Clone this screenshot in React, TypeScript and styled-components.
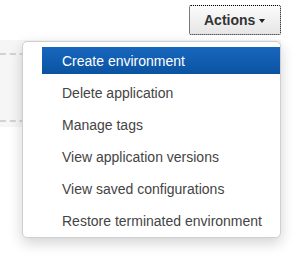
import React from 'react';
import styled, { createGlobalStyle } from 'styled-components';

const GlobalStyle = createGlobalStyle`
  html, body {
    margin: 0;
    padding: 0;
    background: #fff;
    font-family: "Liberation Sans", Arial, sans-serif;
  }
`;

const Page = styled.div`
  width: 301px;
  height: 257px;
  overflow: hidden;
`;

const Toolbar = styled.div`
  display: flex;
  justify-content: flex-end;
  padding: 5px 20px 0 0;
`;

const ActionsWrap = styled.div`
  position: relative;
`;

const ActionsButton = styled.button`
  display: flex;
  align-items: center;
  gap: 4px;
  box-sizing: border-box;
  width: 92px;
  height: 30px;
  padding: 0 0 0 14px;
  border: 1px dotted #000;
  border-radius: 2px;
  background: linear-gradient(#fbfbfb, #e6e6e6);
  color: #333;
  font-family: "Liberation Sans", Arial, sans-serif;
  font-size: 14px;
  font-weight: bold;
  cursor: pointer;
`;

const Caret = styled.span`
  width: 0;
  height: 0;
  margin-top: 1px;
  border-left: 3.5px solid transparent;
  border-right: 3.5px solid transparent;
  border-top: 4px solid #222;
`;

const Menu = styled.ul`
  position: absolute;
  top: calc(100% + 6px);
  right: 0;
  z-index: 2;
  box-sizing: border-box;
  width: 259px;
  margin: 0;
  padding: 5px 0 3px 0;
  list-style: none;
  display: flex;
  flex-direction: column;
  gap: 5px;
  background: #fff;
  border: 1px solid #cfcfcf;
  border-radius: 5px;
  box-shadow: 0 5px 14px rgba(0, 0, 0, 0.18);
`;

const MenuItem = styled.li<{ active?: boolean }>`
  display: flex;
  align-items: center;
  height: 27px;
  margin-left: 19px;
  padding-left: 20px;
  font-size: 14px;
  white-space: nowrap;
  color: ${(p) => (p.active ? '#fff' : '#444')};
  background: ${(p) => (p.active ? 'linear-gradient(#1767bd, #0b53a2)' : 'transparent')};
`;

const Panel = styled.div`
  margin-top: 5px;
  width: 281px;
  height: 87px;
  box-sizing: border-box;
  padding-top: 13px;
  background: #f6f6f6;
`;

const DropZone = styled.div`
  height: 69px;
  box-sizing: border-box;
  border: 2px dashed #d2d2d2;
  border-left: none;
`;

const items = [
  'Create environment',
  'Delete application',
  'Manage tags',
  'View application versions',
  'View saved configurations',
  'Restore terminated environment',
];

export default function App() {
  return (
    <Page>
      <GlobalStyle />
      <Toolbar>
        <ActionsWrap>
          <ActionsButton>
            Actions
            <Caret />
          </ActionsButton>
          <Menu>
            {items.map((label, i) => (
              <MenuItem key={label} active={i === 0}>
                {label}
              </MenuItem>
            ))}
          </Menu>
        </ActionsWrap>
      </Toolbar>
      <Panel>
        <DropZone />
      </Panel>
    </Page>
  );
}
